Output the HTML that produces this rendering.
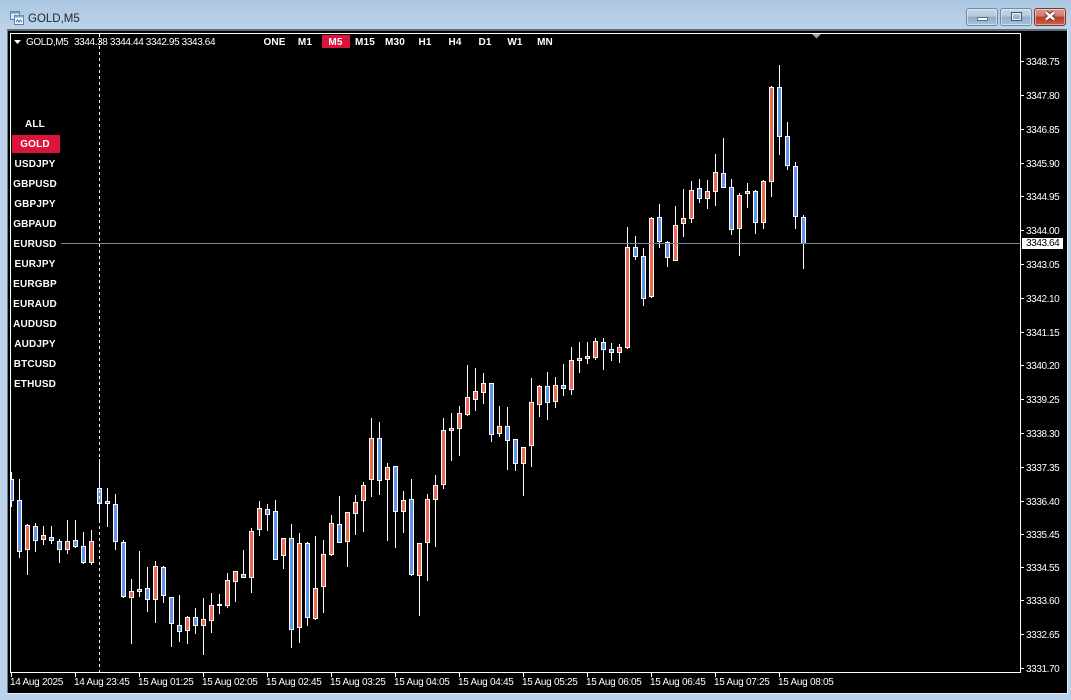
<!DOCTYPE html>
<html><head><meta charset="utf-8"><title>GOLD,M5</title>
<style>
html,body{margin:0;padding:0;width:1071px;height:700px;overflow:hidden;background:#b9d1ea}
#bar{position:absolute;left:0;top:0;width:1071px;height:30px;background:linear-gradient(#a9c5df,#b5cee5 50%,#bcd3e9)}
#win{position:absolute;left:7px;top:29px;width:1060px;height:664px;background:#000;border-left:1px solid #707a84;box-sizing:border-box;border-top:2px solid #5f6b76}
#edgeb{position:absolute;left:7px;top:693px;width:1061px;height:1px;background:#e8eff6}
#edger{position:absolute;left:1067px;top:30px;width:1px;height:664px;background:#e8eff6}
.t{position:absolute;white-space:nowrap;font-family:"Liberation Sans",sans-serif}
#title{left:28px;top:12px;font-size:11.5px;line-height:14px;color:#1b2430}
.btn{position:absolute;top:8px;height:18px;width:32px;box-sizing:border-box;border:1px solid #6f8aa6;border-radius:3px;box-shadow:inset 0 0 0 1px rgba(255,255,255,.45);background:linear-gradient(#c6d8ea,#b4cade 45%,#8fadc9 50%,#a6c2dc)}
.x{background:linear-gradient(#dc9a8e,#d2796b 45%,#b83c2c 50%,#c9604c);border-color:#7a3a34}
.h{font-size:10px;line-height:12px;color:#fff;letter-spacing:-.38px;margin-top:1px}
.b{font-size:10px;font-weight:bold;line-height:12px;color:#fff;letter-spacing:.15px;transform:translateX(-50%)}
.p{left:1026px;font-size:10px;line-height:12px;color:#fff;letter-spacing:-.4px;margin-top:1px}
.d{top:677px;font-size:10px;line-height:12px;color:#fff;letter-spacing:-.28px}
.r{position:absolute;background:#dc143c}
.k{position:absolute;background:#000;left:12px;width:48px;height:20px}
svg{position:absolute;left:0;top:0}
</style></head><body>
<div id="bar"></div>
<svg width="30" height="30" style="left:0;top:0"><rect x="10.500" y="11.500" width="9" height="8" fill="#dcebf7" stroke="#5b83ad"/><rect x="10.500" y="11.500" width="9" height="2" fill="#6d97c0"/><rect x="14.500" y="15.500" width="9" height="9" fill="#f4f8fc" stroke="#5b83ad"/><rect x="14.500" y="15.500" width="9" height="2" fill="#7ba3ca"/><path d="M16 22l1.500-2 1.500 2 1.500-2 1.500 2" fill="none" stroke="#4a6f96"/></svg>
<div id="title" class="t">GOLD,M5</div>
<div class="btn" style="left:966px"></div>
<div class="btn" style="left:1000px"></div>
<div class="btn x" style="left:1034px"></div>
<svg width="1071" height="30">
<rect x="977.500" y="17.500" width="10" height="3" fill="#fff" stroke="#5a6f86"/>
<rect x="1011.500" y="12.500" width="10" height="8" fill="none" stroke="#46586c"/><rect x="1012.500" y="13.500" width="8" height="6" fill="none" stroke="#e8f0f8"/><rect x="1014" y="15" width="5" height="3" fill="#9db7cf"/>
<path d="M1046 12.500l8 7M1054 12.500l-8 7" stroke="#5c2a24" stroke-width="4.500"/><path d="M1046 12.500l8 7M1054 12.500l-8 7" stroke="#fff" stroke-width="2.500"/>
</svg>
<div id="win"></div><div id="edgeb"></div><div id="edger"></div>

<svg width="1071" height="700" shape-rendering="crispEdges">
<path fill="none" stroke="#fff" d="M11.500 472V507M19.500 479V558M27.500 524V575M35.500 523V552M43.500 526V545M51.500 526V544M59.500 539V563M67.500 520V554M75.500 520V548M83.500 532V564M91.500 530V565M99.500 459V522M107.500 488V527M115.500 494V550M123.500 540V598M131.500 579V644M139.500 551V597M147.500 567V612M155.500 561V623M163.500 566V603M171.500 597V647M179.500 595V642M187.500 616V644M195.500 608V634M203.500 598V655M211.500 593V633M219.500 594V614M227.500 573V608M235.500 571V602M243.500 550V578M251.500 528V593M259.500 501V536M267.500 504V531M275.500 500V560M283.500 538V569M291.500 524V648M299.500 533V643M307.500 542V626M315.500 536V620M323.500 540V613M331.500 515V556M339.500 496V543M347.500 512V567M355.500 495V535M363.500 482V532M371.500 418V497M379.500 422V495M387.500 463V541M395.500 466V548M403.500 491V533M411.500 479V576M419.500 543V616M427.500 494V581M435.500 475V547M443.500 418V489M451.500 413V461M459.500 406V456M467.500 365V416M475.500 368V411M483.500 373V404M491.500 383V442M499.500 406V437M507.500 407V470M515.500 439V471M523.500 447V496M531.500 378V467M539.500 385V417M547.500 372V420M555.500 377V408M563.500 364V396M571.500 347V395M579.500 342V373M587.500 342V364M595.500 338V360M603.500 338V370M611.500 343V361M619.500 344V363M627.500 227V349M635.500 236V260M643.500 248V306M651.500 217V298M659.500 204V248M667.500 241V267M675.500 206V261M683.500 189V237M691.500 181V223M699.500 179V203M707.500 180V209M715.500 154V206M723.500 138V188M731.500 179V235M739.500 193V256M747.500 183V208M755.500 190V234M763.500 180V229M771.500 86V197M779.500 65V155M787.500 122V170M795.500 162V229M803.500 215V269"/>
<path fill="#6495ed" stroke="#fff" d="M9.500 479.500h4v21h-4zM17.500 500.500h4v51h-4zM33.500 526.500h4v14h-4zM49.500 537.500h4v3h-4zM57.500 541.500h4v8h-4zM73.500 540.500h4v6h-4zM81.500 546.500h4v16h-4zM97.500 488.500h4v15h-4zM105.500 501.500h4v2h-4zM113.500 504.500h4v37h-4zM121.500 542.500h4v54h-4zM145.500 588.500h4v11h-4zM161.500 567.500h4v28h-4zM169.500 597.500h4v26h-4zM177.500 625.500h4v6h-4zM193.500 617.500h4v8h-4zM241.500 574.500h4v3h-4zM265.500 509.500h4v5h-4zM273.500 511.500h4v48h-4zM289.500 538.500h4v91h-4zM305.500 543.500h4v74h-4zM337.500 524.500h4v18h-4zM377.500 438.500h4v42h-4zM393.500 466.500h4v45h-4zM409.500 499.500h4v75h-4zM489.500 383.500h4v51h-4zM505.500 426.500h4v14h-4zM513.500 439.500h4v24h-4zM545.500 386.500h4v16h-4zM561.500 385.500h4v3h-4zM601.500 342.500h4v7h-4zM609.500 349.500h4v3h-4zM633.500 247.500h4v9h-4zM641.500 256.500h4v42h-4zM657.500 217.500h4v24h-4zM665.500 242.500h4v15h-4zM697.500 188.500h4v10h-4zM721.500 173.500h4v14h-4zM729.500 187.500h4v42h-4zM753.500 191.500h4v31h-4zM777.500 87.500h4v49h-4zM785.500 136.500h4v29h-4zM793.500 166.500h4v50h-4zM801.500 217.500h4v26h-4z"/>
<path fill="#ee6a50" stroke="#fff" d="M25.500 525.500h4v24h-4zM41.500 535.500h4v4h-4zM65.500 541.500h4v8h-4zM89.500 541.500h4v21h-4zM129.500 591.500h4v6h-4zM137.500 589.500h4v2h-4zM153.500 566.500h4v33h-4zM185.500 617.500h4v13h-4zM201.500 619.500h4v6h-4zM209.500 605.500h4v15h-4zM217.500 604.500h4v1h-4zM225.500 580.500h4v25h-4zM233.500 571.500h4v10h-4zM249.500 531.500h4v46h-4zM257.500 508.500h4v21h-4zM281.500 538.500h4v17h-4zM297.500 543.500h4v84h-4zM313.500 588.500h4v30h-4zM321.500 554.500h4v32h-4zM329.500 523.500h4v31h-4zM345.500 512.500h4v29h-4zM353.500 502.500h4v11h-4zM361.500 485.500h4v15h-4zM369.500 438.500h4v41h-4zM385.500 467.500h4v12h-4zM401.500 500.500h4v11h-4zM417.500 543.500h4v32h-4zM425.500 499.500h4v43h-4zM433.500 485.500h4v14h-4zM441.500 430.500h4v54h-4zM449.500 428.500h4v2h-4zM457.500 413.500h4v15h-4zM465.500 397.500h4v17h-4zM473.500 391.500h4v8h-4zM481.500 383.500h4v9h-4zM497.500 426.500h4v7h-4zM521.500 447.500h4v16h-4zM529.500 402.500h4v43h-4zM537.500 386.500h4v18h-4zM553.500 385.500h4v16h-4zM569.500 360.500h4v29h-4zM577.500 358.500h4v2h-4zM585.500 356.500h4v2h-4zM593.500 341.500h4v16h-4zM617.500 347.500h4v5h-4zM625.500 247.500h4v100h-4zM649.500 218.500h4v78h-4zM673.500 225.500h4v35h-4zM681.500 218.500h4v5h-4zM689.500 190.500h4v28h-4zM705.500 191.500h4v7h-4zM713.500 172.500h4v19h-4zM737.500 195.500h4v33h-4zM745.500 191.500h4v2h-4zM761.500 181.500h4v41h-4zM769.500 87.500h4v94h-4z"/>
<path fill="none" stroke="#778899" d="M61 243.500H1020"/>
<rect x="8" y="31" width="3" height="662" fill="#000"/>
<path fill="none" stroke="#fff" d="M10.500 33.500H1020.500V672.500H10.500Z"/>
<path fill="none" stroke="#fff" d="M11.500 673V677M75.500 673V677M139.500 673V677M203.500 673V677M267.500 673V677M331.500 673V677M395.500 673V677M459.500 673V677M523.500 673V677M587.500 673V677M651.500 673V677M715.500 673V677M779.500 673V677M1021 61.500h3M1021 95.500h3M1021 129.500h3M1021 163.500h3M1021 196.500h3M1021 230.500h3M1021 264.500h3M1021 298.500h3M1021 332.500h3M1021 365.500h3M1021 399.500h3M1021 433.500h3M1021 467.500h3M1021 501.500h3M1021 534.500h3M1021 567.500h3M1021 600.500h3M1021 634.500h3M1021 668.500h3"/>
<path fill="#fff" shape-rendering="auto" d="M14 40h7l-3.500 4z"/>
<path fill="#9aa4ae" shape-rendering="auto" d="M812 34h9l-4.500 4.500z"/>
</svg>

<div class="t h" style="left:26px;top:36px">GOLD,M5</div>
<div class="t h" style="left:74px;top:36px">3344.38 3344.44 3342.95 3343.64</div>

<div class="r" style="left:322px;top:35px;width:28px;height:13px"></div>
<div class="t b" style="left:274.500px;top:37px">ONE</div>
<div class="t b" style="left:305px;top:37px">M1</div>
<div class="t b" style="left:335.500px;top:37px">M5</div>
<div class="t b" style="left:365px;top:37px">M15</div>
<div class="t b" style="left:395px;top:37px">M30</div>
<div class="t b" style="left:425px;top:37px">H1</div>
<div class="t b" style="left:455px;top:37px">H4</div>
<div class="t b" style="left:485px;top:37px">D1</div>
<div class="t b" style="left:515px;top:37px">W1</div>
<div class="t b" style="left:545px;top:37px">MN</div>

<div class="k" style="top:234px"></div>
<div class="r" style="left:12px;top:135px;width:48px;height:18px"></div>
<div class="t b" style="left:35px;top:119px">ALL</div>
<div class="t b" style="left:35px;top:139px">GOLD</div>
<div class="t b" style="left:35px;top:159px">USDJPY</div>
<div class="t b" style="left:35px;top:179px">GBPUSD</div>
<div class="t b" style="left:35px;top:199px">GBPJPY</div>
<div class="t b" style="left:35px;top:219px">GBPAUD</div>
<div class="t b" style="left:35px;top:239px">EURUSD</div>
<div class="t b" style="left:35px;top:259px">EURJPY</div>
<div class="t b" style="left:35px;top:279px">EURGBP</div>
<div class="t b" style="left:35px;top:299px">EURAUD</div>
<div class="t b" style="left:35px;top:319px">AUDUSD</div>
<div class="t b" style="left:35px;top:339px">AUDJPY</div>
<div class="t b" style="left:35px;top:359px">BTCUSD</div>
<div class="t b" style="left:35px;top:379px">ETHUSD</div>

<svg width="1071" height="700" shape-rendering="crispEdges"><path fill="none" stroke="#fff" stroke-dasharray="3 3" d="M99.500 34V672"/></svg>

<div class="t p" style="top:56px">3348.75</div>
<div class="t p" style="top:90px">3347.80</div>
<div class="t p" style="top:124px">3346.85</div>
<div class="t p" style="top:158px">3345.90</div>
<div class="t p" style="top:191px">3344.95</div>
<div class="t p" style="top:225px">3344.00</div>
<div class="t p" style="top:259px">3343.05</div>
<div class="t p" style="top:293px">3342.10</div>
<div class="t p" style="top:327px">3341.15</div>
<div class="t p" style="top:360px">3340.20</div>
<div class="t p" style="top:394px">3339.25</div>
<div class="t p" style="top:428px">3338.30</div>
<div class="t p" style="top:462px">3337.35</div>
<div class="t p" style="top:496px">3336.40</div>
<div class="t p" style="top:529px">3335.45</div>
<div class="t p" style="top:562px">3334.55</div>
<div class="t p" style="top:595px">3333.60</div>
<div class="t p" style="top:629px">3332.65</div>
<div class="t p" style="top:663px">3331.70</div>
<div class="r" style="left:1022px;top:238px;width:41px;height:11px;background:#fff"></div>
<div class="t p" style="top:237px;color:#000">3343.64</div>

<div class="t d" style="left:10px">14 Aug 2025</div>
<div class="t d" style="left:74px">14 Aug 23:45</div>
<div class="t d" style="left:138px">15 Aug 01:25</div>
<div class="t d" style="left:202px">15 Aug 02:05</div>
<div class="t d" style="left:266px">15 Aug 02:45</div>
<div class="t d" style="left:330px">15 Aug 03:25</div>
<div class="t d" style="left:394px">15 Aug 04:05</div>
<div class="t d" style="left:458px">15 Aug 04:45</div>
<div class="t d" style="left:522px">15 Aug 05:25</div>
<div class="t d" style="left:586px">15 Aug 06:05</div>
<div class="t d" style="left:650px">15 Aug 06:45</div>
<div class="t d" style="left:714px">15 Aug 07:25</div>
<div class="t d" style="left:778px">15 Aug 08:05</div>
</body></html>
